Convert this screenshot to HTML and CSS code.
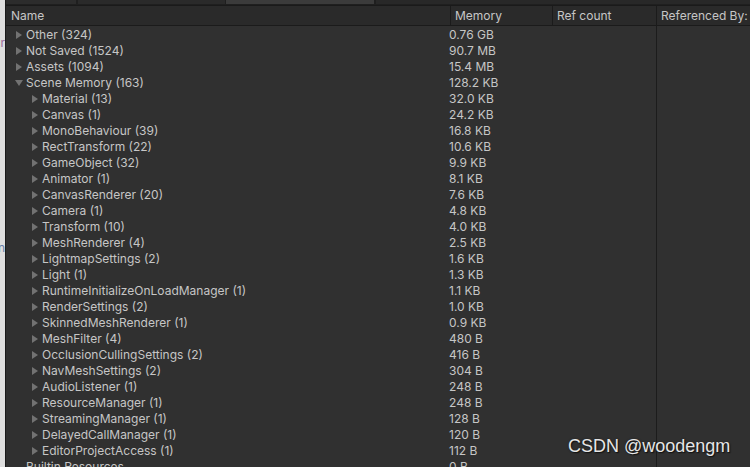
FILE: index.html
```html
<!DOCTYPE html>
<html>
<head>
<meta charset="utf-8">
<link rel="stylesheet" href="styles.css">
</head>
<body>
<div class="app">
  <div class="side">
    <div class="frag frag1">Cur</div>
    <div class="frag frag2">Scan</div>
  </div>
  <div class="main">
    <div class="tabbar">
      <div class="tab t1"></div>
      <div class="tab t2"></div>
      <div class="tab t3"></div>
      <div class="tab t4"></div>
    </div>
    <div class="header">
      <div class="hcell c-name">Name</div>
      <div class="hcell c-mem">Memory</div>
      <div class="hcell c-ref">Ref count</div>
      <div class="hcell c-by">Referenced By:</div>
    </div>
    <div class="content">
      <div class="tree">
        <div class="row l0"><span class="arr r"></span><span class="nm">Other (324)</span><span class="mem">0.76 GB</span></div>
        <div class="row l0"><span class="arr r"></span><span class="nm">Not Saved (1524)</span><span class="mem">90.7 MB</span></div>
        <div class="row l0"><span class="arr r"></span><span class="nm">Assets (1094)</span><span class="mem">15.4 MB</span></div>
        <div class="row l0"><span class="arr d"></span><span class="nm">Scene Memory (163)</span><span class="mem">128.2 KB</span></div>
        <div class="row l1"><span class="arr r"></span><span class="nm">Material (13)</span><span class="mem">32.0 KB</span></div>
        <div class="row l1"><span class="arr r"></span><span class="nm">Canvas (1)</span><span class="mem">24.2 KB</span></div>
        <div class="row l1"><span class="arr r"></span><span class="nm">MonoBehaviour (39)</span><span class="mem">16.8 KB</span></div>
        <div class="row l1"><span class="arr r"></span><span class="nm">RectTransform (22)</span><span class="mem">10.6 KB</span></div>
        <div class="row l1"><span class="arr r"></span><span class="nm">GameObject (32)</span><span class="mem">9.9 KB</span></div>
        <div class="row l1"><span class="arr r"></span><span class="nm">Animator (1)</span><span class="mem">8.1 KB</span></div>
        <div class="row l1"><span class="arr r"></span><span class="nm">CanvasRenderer (20)</span><span class="mem">7.6 KB</span></div>
        <div class="row l1"><span class="arr r"></span><span class="nm">Camera (1)</span><span class="mem">4.8 KB</span></div>
        <div class="row l1"><span class="arr r"></span><span class="nm">Transform (10)</span><span class="mem">4.0 KB</span></div>
        <div class="row l1"><span class="arr r"></span><span class="nm">MeshRenderer (4)</span><span class="mem">2.5 KB</span></div>
        <div class="row l1"><span class="arr r"></span><span class="nm">LightmapSettings (2)</span><span class="mem">1.6 KB</span></div>
        <div class="row l1"><span class="arr r"></span><span class="nm">Light (1)</span><span class="mem">1.3 KB</span></div>
        <div class="row l1"><span class="arr r"></span><span class="nm">RuntimeInitializeOnLoadManager (1)</span><span class="mem">1.1 KB</span></div>
        <div class="row l1"><span class="arr r"></span><span class="nm">RenderSettings (2)</span><span class="mem">1.0 KB</span></div>
        <div class="row l1"><span class="arr r"></span><span class="nm">SkinnedMeshRenderer (1)</span><span class="mem">0.9 KB</span></div>
        <div class="row l1"><span class="arr r"></span><span class="nm">MeshFilter (4)</span><span class="mem">480 B</span></div>
        <div class="row l1"><span class="arr r"></span><span class="nm">OcclusionCullingSettings (2)</span><span class="mem">416 B</span></div>
        <div class="row l1"><span class="arr r"></span><span class="nm">NavMeshSettings (2)</span><span class="mem">304 B</span></div>
        <div class="row l1"><span class="arr r"></span><span class="nm">AudioListener (1)</span><span class="mem">248 B</span></div>
        <div class="row l1"><span class="arr r"></span><span class="nm">ResourceManager (1)</span><span class="mem">248 B</span></div>
        <div class="row l1"><span class="arr r"></span><span class="nm">StreamingManager (1)</span><span class="mem">128 B</span></div>
        <div class="row l1"><span class="arr r"></span><span class="nm">DelayedCallManager (1)</span><span class="mem">120 B</span></div>
        <div class="row l1"><span class="arr r"></span><span class="nm">EditorProjectAccess (1)</span><span class="mem">112 B</span></div>
        <div class="row l0"><span class="arr none"></span><span class="nm">Builtin Resources</span><span class="mem">0 B</span></div>
      </div>
      <div class="refpanel"></div>
    </div>
  </div>
  <div class="watermark">CSDN @woodengm</div>
</div>
</body>
</html>
```

FILE: styles.css
```css
html, body {
  margin: 0;
  padding: 0;
  width: 750px;
  height: 467px;
  overflow: hidden;
  background: #303030;
}
.app {
  position: relative;
  display: flex;
  width: 750px;
  height: 467px;
  font-family: Inter, "Noto Sans", sans-serif;
  font-size: 12px;
  color: #c6c6c6;
}
.side {
  width: 5px;
  flex: none;
  background: #dedede;
  border-right: 1px solid #1a1a1a;
  overflow: hidden;
  direction: rtl;
  white-space: nowrap;
  font-size: 12px;
}
.frag { line-height: 14px; }
.frag1 { margin-top: 36px; color: #9b6a9b; }
.frag2 { margin-top: 191px; color: #6a7fa8; }
.main {
  flex: 1;
  display: flex;
  flex-direction: column;
  min-width: 0;
}
.tabbar {
  display: flex;
  height: 4px;
  padding-bottom: 1px;
  background: #1f1f1f;
  border-bottom: 1px solid #1a1a1a;
  flex: none;
}
.tab { height: 4px; }
.t1 { width: 70px; background: #2c2c2c; margin-right: 2px; }
.t2 { width: 147px; background: #2a2a2a; margin-right: 1px; }
.t3 { width: 148px; background: #3b3b3b; margin-right: 2px; }
.t4 { flex: 1; background: #282828; }
.header {
  display: flex;
  height: 19px;
  flex: none;
  background: #2a2a2a;
  border-bottom: 1px solid #1b1b1b;
}
.hcell {
  line-height: 20px;
  padding-left: 4px;
  box-sizing: border-box;
  white-space: nowrap;
  overflow: hidden;
}
.c-name { width: 444px; padding-left: 5px; }
.c-mem { width: 102px; border-left: 1px solid #1b1b1b; }
.c-ref { width: 104px; border-left: 1px solid #1b1b1b; }
.c-by { flex: 1; border-left: 1px solid #1b1b1b; }
.content {
  flex: 1;
  display: flex;
  min-height: 0;
}
.tree {
  width: 650px;
  flex: none;
  background: #303030;
}
.refpanel {
  flex: 1;
  background: #303030;
  border-left: 1px solid #1c1c1c;
}
.row {
  display: flex;
  align-items: center;
  height: 16px;
  white-space: nowrap;
}
.row:first-child { margin-top: 1px; }
.row.l0 { padding-left: 10px; }
.row.l1 { padding-left: 26px; }
.arr {
  width: 10px;
  height: 16px;
  flex: none;
  position: relative;
}
.arr.r::before {
  content: "";
  position: absolute;
  left: 0;
  top: 4px;
  border-left: 6px solid #727272;
  border-top: 4px solid transparent;
  border-bottom: 4px solid transparent;
}
.arr.d::before {
  content: "";
  position: absolute;
  left: -1px;
  top: 5px;
  border-top: 6px solid #727272;
  border-left: 4px solid transparent;
  border-right: 4px solid transparent;
}
.nm {
  flex: 1;
  line-height: 16px;
}
.mem {
  width: 207px;
  flex: none;
  line-height: 16px;
}
.watermark {
  position: absolute;
  left: 568px;
  top: 436px;
  font-family: "Liberation Sans", Arial, sans-serif;
  font-size: 18px;
  color: #e6e6e6;
  text-shadow: 1px 1px 1px #111, 0 0 2px #222;
  white-space: nowrap;
}
```
